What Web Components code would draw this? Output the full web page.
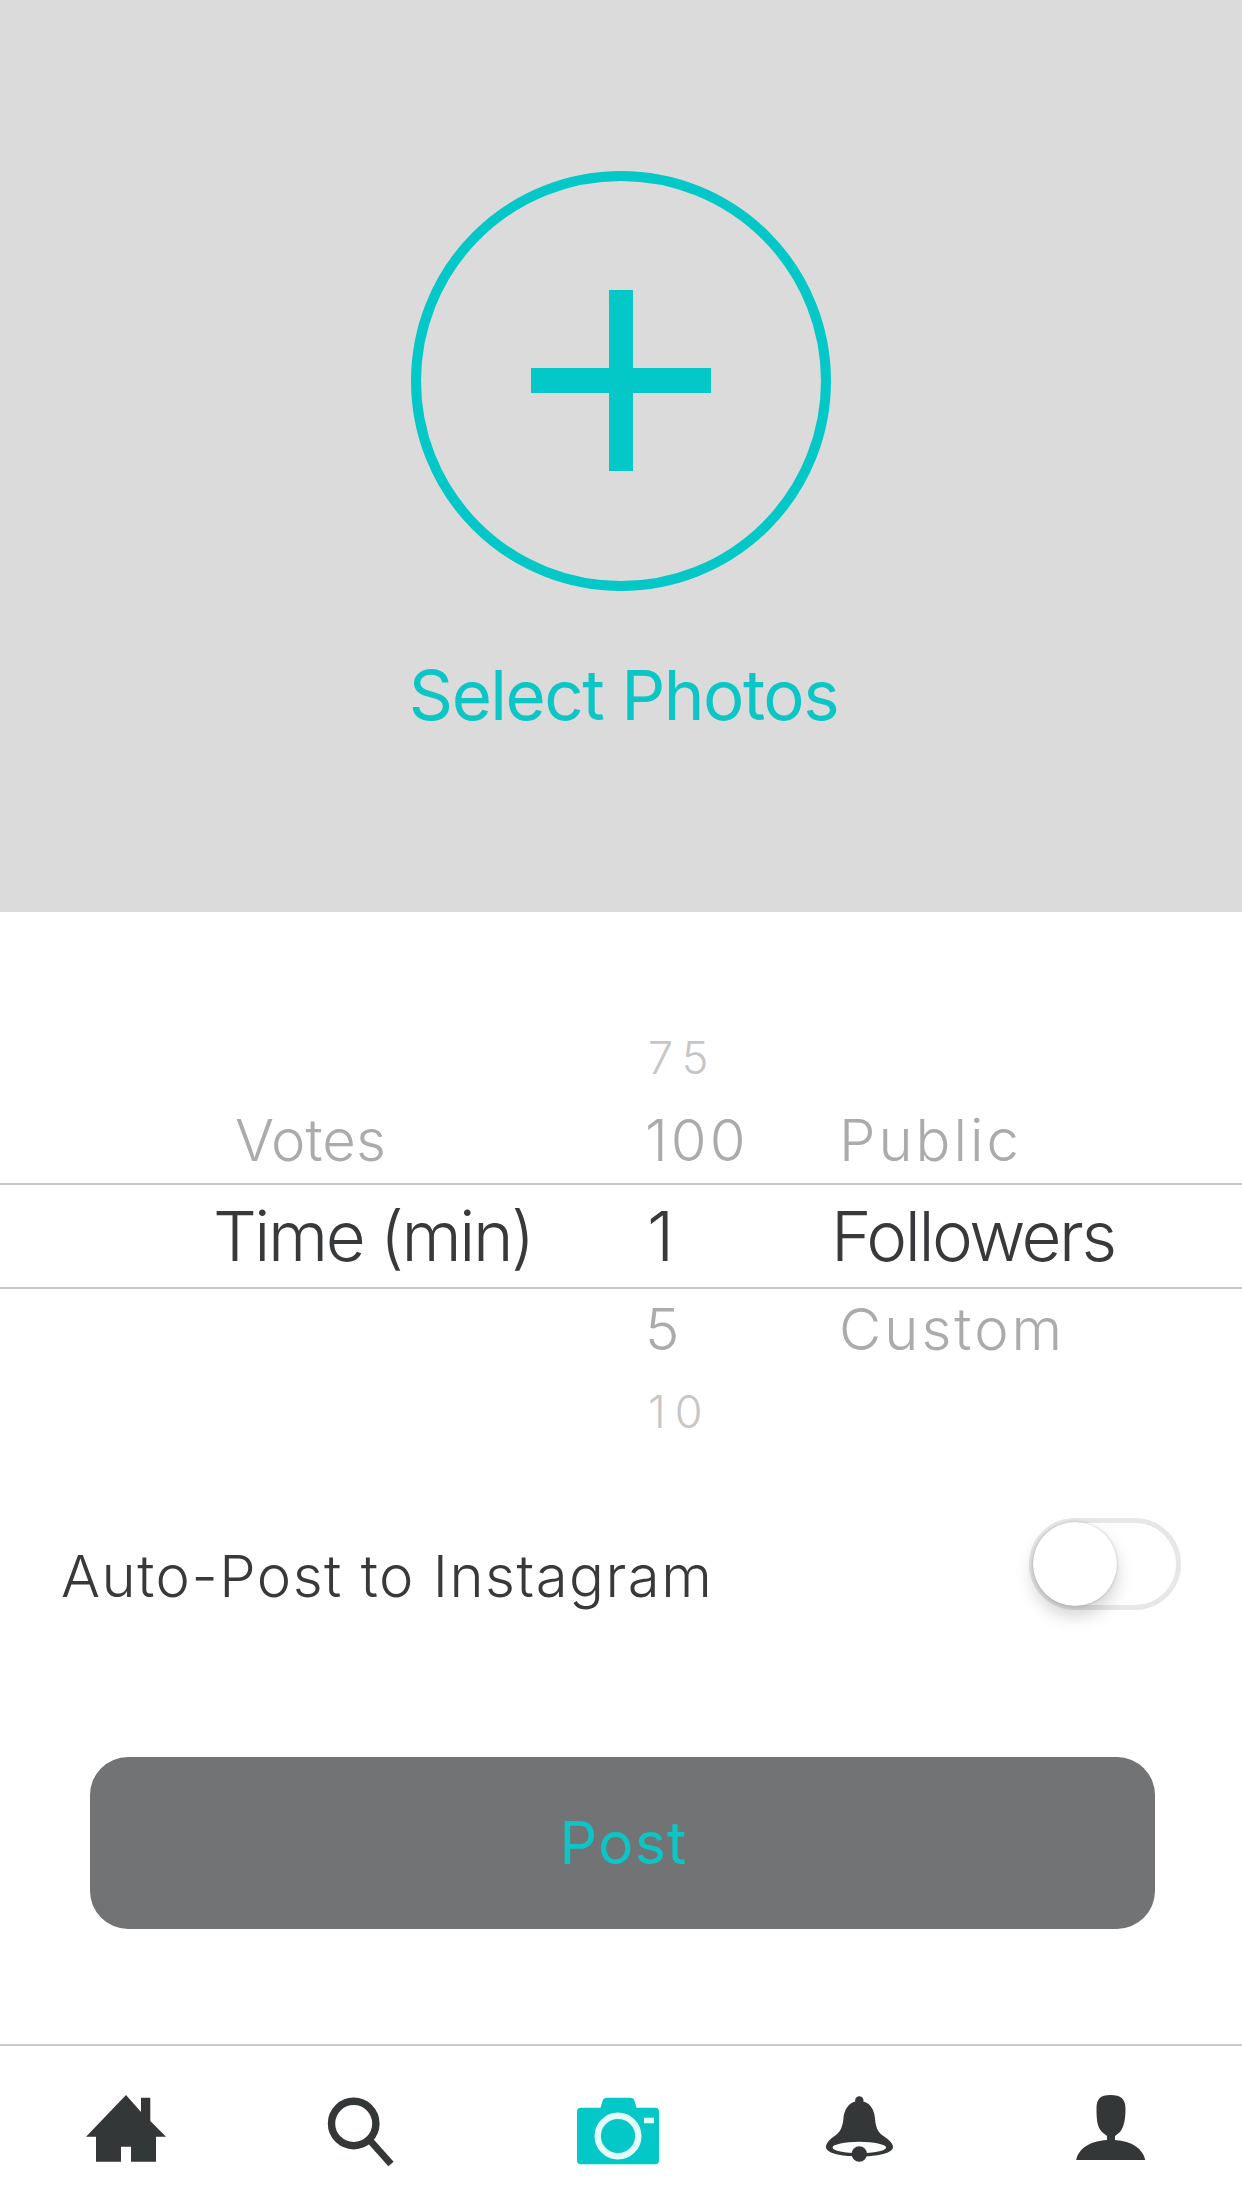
<!DOCTYPE html>
<html>
<head>
<meta charset="utf-8">
<title>New post</title>
<style>
  html, body { margin: 0; padding: 0; background: #fff; }
  body { font-family: Inter, "Liberation Sans", sans-serif; font-weight: 300; color: #38393b; }
</style>
</head>
<body>
<new-post-screen>
  <photo-select>Select Photos</photo-select>
  <option-wheel>
    <wheel-row level="far"><span slot="b">75</span></wheel-row>
    <wheel-row level="near"><span slot="a" style="letter-spacing:0">Votes</span><span slot="b">100</span><span slot="c">Public</span></wheel-row>
    <wheel-row level="current"><span slot="a">Time (min)</span><span slot="b">1</span><span slot="c">Followers</span></wheel-row>
    <wheel-row level="near"><span slot="b">5</span><span slot="c">Custom</span></wheel-row>
    <wheel-row level="far"><span slot="b">10</span></wheel-row>
  </option-wheel>
  <toggle-row>Auto-Post to Instagram</toggle-row>
  <post-button>Post</post-button>
  <tab-bar>
    <tab-icon name="home"></tab-icon>
    <tab-icon name="search"></tab-icon>
    <tab-icon name="camera"></tab-icon>
    <tab-icon name="bell"></tab-icon>
    <tab-icon name="person"></tab-icon>
  </tab-bar>
</new-post-screen>

<script>
const TEAL = '#04c7c7';

class NewPostScreen extends HTMLElement {
  constructor() {
    super();
    this.attachShadow({ mode: 'open' });
    this.shadowRoot.innerHTML = `
      <style>
        :host { display: flex; flex-direction: column; width: 1242px; height: 2208px; overflow: hidden; background: #fff; }
      </style>
      <slot></slot>
    `;
  }
}

class PhotoSelect extends HTMLElement {
  constructor() {
    super();
    this.attachShadow({ mode: 'open' });
    this.shadowRoot.innerHTML = `
      <style>
        :host { display: flex; flex-direction: column; align-items: center; height: 912px; padding-top: 171px; box-sizing: border-box; background: #dbdbdb; }
        svg { display: block; }
        .label { margin: 64px 0 0 5px; font-size: 69px; line-height: 80px; font-weight: 400; color: #0cc5c5; letter-spacing: -1.5px; }
      </style>
      <svg width="420" height="420" viewBox="0 0 420 420">
        <circle cx="210" cy="210" r="205" fill="none" stroke="${TEAL}" stroke-width="10"/>
        <rect x="198" y="119" width="24" height="181" fill="${TEAL}"/>
        <rect x="120" y="197" width="180" height="25" fill="${TEAL}"/>
      </svg>
      <div class="label"><slot></slot></div>
    `;
  }
}

class OptionWheel extends HTMLElement {
  constructor() {
    super();
    this.attachShadow({ mode: 'open' });
    this.shadowRoot.innerHTML = `
      <style>
        :host { display: block; margin-top: 106px; }
      </style>
      <slot></slot>
    `;
  }
}

class WheelRow extends HTMLElement {
  constructor() {
    super();
    this.attachShadow({ mode: 'open' });
    this.shadowRoot.innerHTML = `
      <style>
        :host { display: grid; grid-template-columns: 645px 186px 1fr; align-items: center; box-sizing: border-box; height: 82px; white-space: nowrap; }
        :host([level="far"]) { padding-bottom: 4px; font-size: 45px; letter-spacing: 9px; color: #c6c6c6; }
        :host([level="near"]) { padding-bottom: 3px; font-size: 58px; letter-spacing: 3px; color: #ababab; height: 83px; }
        :host([level="current"]) { font-size: 69px; letter-spacing: -2.5px; color: #38393b; height: 106px; border-top: 2px solid #c8c8c8; border-bottom: 2px solid #c8c8c8; }
        .a { padding-left: 235px; }
        .b { padding-left: 0; }
        .c { padding-left: 8px; }
        :host([level="far"]) .b { padding-left: 3px; }
        :host([level="current"]) .a { padding-left: 213px; }
        :host([level="current"]) .b { padding-left: 2px; }
        :host([level="current"]) .c { padding-left: 0; }
      </style>
      <div class="a"><slot name="a"></slot></div>
      <div class="b"><slot name="b"></slot></div>
      <div class="c"><slot name="c"></slot></div>
    `;
  }
}

class ToggleRow extends HTMLElement {
  constructor() {
    super();
    this.attachShadow({ mode: 'open' });
    this.shadowRoot.innerHTML = `
      <style>
        :host { display: flex; justify-content: space-between; align-items: flex-start; margin-top: 64px; padding: 0 61px 0 61px; }
        .label { margin-top: 28px; font-size: 58px; line-height: 60px; letter-spacing: 1.5px; }
        .track { display: flex; width: 152px; height: 92px; box-sizing: border-box; border: 5px solid #e7e7e7; border-radius: 46px; background: #fff; }
        .knob { flex: none; width: 84px; height: 84px; margin: -1px; border-radius: 50%; background: #fff; box-shadow: 0 0 3px rgba(0,0,0,.22), 0 10px 18px rgba(0,0,0,.18); }
      </style>
      <div class="label"><slot></slot></div>
      <div class="track"><div class="knob"></div></div>
    `;
  }
}

class PostButton extends HTMLElement {
  constructor() {
    super();
    this.attachShadow({ mode: 'open' });
    this.shadowRoot.innerHTML = `
      <style>
        :host { display: flex; align-items: center; justify-content: center; box-sizing: border-box; height: 172px; margin: 147px 87px 0 90px; padding: 0 0 2px 2px; border-radius: 38px; background: #727374; color: #0cc5c5; font-size: 59px; font-weight: 400; letter-spacing: 1.2px; }
      </style>
      <slot></slot>
    `;
  }
}

class TabBar extends HTMLElement {
  constructor() {
    super();
    this.attachShadow({ mode: 'open' });
    this.shadowRoot.innerHTML = `
      <style>
        :host { display: grid; grid-template-columns: 236px 256px 242px 252px 100px; flex: 1; margin-top: 115px; padding: 39px 0 0 76px; border-top: 2px solid #cacaca; }
      </style>
      <slot></slot>
    `;
  }
}

// viewBox matches the 100x90 cell each glyph was measured in
const ICONS = {
  home: `<path fill="#333737" fill-rule="evenodd" d="M50 10L65 27V12.7H74.3V36L90 51.7H80V76.7H55V61.7H45V76.7H20V51.7H10Z"/>`,
  search: `<circle cx="41.7" cy="38.5" r="22.2" fill="none" stroke="#333737" stroke-width="7.4"/>
           <path d="M58 55.5L79 79" fill="none" stroke="#333737" stroke-width="7"/>`,
  camera: `<path fill="${TEAL}" d="M32.5 22.7L34.5 16Q35.5 12.7 39 12.7H62Q65.5 12.7 66.5 16L68.5 22.7H87Q91 22.7 91 26.7V75.3Q91 79.3 87 79.3H13Q9 79.3 9 75.3V26.7Q9 22.7 13 22.7Z"/>
           <circle cx="50" cy="51" r="20.3" fill="none" stroke="#e4fbfb" stroke-width="6.4"/>
           <rect x="76" y="32.7" width="10" height="5.6" fill="#e4fbfb"/>`,
  bell: `<path fill="#333737" d="M49.3 16C38 16 34.2 26 33.5 33C32.8 42 30 47 26 50C20 54 16 58 16 62C16 68 30 71.5 49.3 71.5C68.6 71.5 83 68 83 62C83 58 78 54 72 50C68 47 65.5 42 65 33C64.4 26 60.6 16 49.3 16Z"/>
         <circle cx="49.3" cy="15.5" r="4.2" fill="#333737"/>
         <ellipse cx="49.3" cy="62.5" rx="26.7" ry="5.8" fill="#fff"/>
         <circle cx="49.3" cy="69" r="7.7" fill="#333737"/>`,
  person: `<path fill="#333737" d="M48.5 10C38 10 34.5 14 34.5 24C34.5 34 35 42 40 47L45 51V55C28 56 16 64 14.3 75H83.3C81 64 70 56 53 55V51L58 47C62 42 63.5 34 63.5 24C63.5 14 59 10 48.5 10Z"/>`
};

class TabIcon extends HTMLElement {
  constructor() {
    super();
    this.attachShadow({ mode: 'open' });
  }

  connectedCallback() {
    this.shadowRoot.innerHTML = `
      <style>
        :host { display: block; width: 100px; height: 90px; }
        svg { display: block; }
      </style>
      <svg width="100" height="90" viewBox="0 0 100 90">${ICONS[this.getAttribute('name')] || ''}</svg>
    `;
  }
}

customElements.define('new-post-screen', NewPostScreen);
customElements.define('photo-select', PhotoSelect);
customElements.define('option-wheel', OptionWheel);
customElements.define('wheel-row', WheelRow);
customElements.define('toggle-row', ToggleRow);
customElements.define('post-button', PostButton);
customElements.define('tab-bar', TabBar);
customElements.define('tab-icon', TabIcon);
</script>
</body>
</html>
